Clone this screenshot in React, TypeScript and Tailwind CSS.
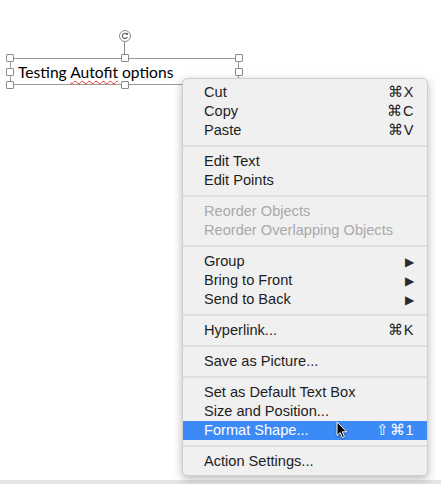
import type { ReactNode } from "react";

type Item =
  | { kind: "item"; label: string; shortcut?: string; submenu?: boolean; disabled?: boolean; active?: boolean }
  | { kind: "sep" };

const MENU: Item[] = [
  { kind: "item", label: "Cut", shortcut: "⌘X" },
  { kind: "item", label: "Copy", shortcut: "⌘C" },
  { kind: "item", label: "Paste", shortcut: "⌘V" },
  { kind: "sep" },
  { kind: "item", label: "Edit Text" },
  { kind: "item", label: "Edit Points" },
  { kind: "sep" },
  { kind: "item", label: "Reorder Objects", disabled: true },
  { kind: "item", label: "Reorder Overlapping Objects", disabled: true },
  { kind: "sep" },
  { kind: "item", label: "Group", submenu: true },
  { kind: "item", label: "Bring to Front", submenu: true },
  { kind: "item", label: "Send to Back", submenu: true },
  { kind: "sep" },
  { kind: "item", label: "Hyperlink...", shortcut: "⌘K" },
  { kind: "sep" },
  { kind: "item", label: "Save as Picture..." },
  { kind: "sep" },
  { kind: "item", label: "Set as Default Text Box" },
  { kind: "item", label: "Size and Position..." },
  { kind: "item", label: "Format Shape...", shortcut: "⇧⌘1", active: true },
  { kind: "sep" },
  { kind: "item", label: "Action Settings..." },
];

function Handle({ hidden }: { hidden?: boolean }) {
  return (
    <div
      className={`h-[8px] w-[8px] rounded-[1px] border border-[#8a8a8a] bg-white ${hidden ? "invisible" : ""}`}
    />
  );
}

function Cursor() {
  return (
    <svg
      width="12"
      height="18"
      viewBox="0 0 12 18"
      className="absolute left-[336px] top-[421px] drop-shadow-[0_1px_1px_rgba(0,0,0,0.4)]"
    >
      <path
        d="M1 1 L1 14.5 L4.2 11.6 L6.4 16.6 L8.4 15.7 L6.3 10.8 L10.6 10.8 Z"
        fill="#000"
        stroke="#fff"
        strokeWidth="1"
        strokeLinejoin="round"
      />
    </svg>
  );
}

function RotateHandle() {
  return (
    <svg width="12" height="12" viewBox="0 0 12 12">
      <circle cx="6" cy="6" r="5.5" fill="#fff" stroke="#8a8a8a" />
      <path d="M8.3 4.6 A2.6 2.6 0 1 0 8.4 7" fill="none" stroke="#555" strokeWidth="1.1" />
      <path d="M8.9 2.6 L8.7 5 L6.4 4.5 Z" fill="#555" />
    </svg>
  );
}

function Row({ item }: { item: Extract<Item, { kind: "item" }> }) {
  let tone = "text-[#1d1d1d]";
  if (item.disabled) tone = "text-[#a9a9a9]";
  if (item.active) tone = "text-white bg-[#3c8af6]";
  let right: ReactNode = null;
  if (item.shortcut) right = <span className="tracking-[0.5px]">{item.shortcut}</span>;
  if (item.submenu) right = <span className="text-[12px] text-[#2a2a2a]">▶</span>;
  return (
    <div className={`flex h-[19px] items-center justify-between pl-[21px] pr-[13px] ${tone}`}>
      <span>{item.label}</span>
      {right}
    </div>
  );
}

export default function App() {
  return (
    <div className="flex h-[484px] w-[441px] flex-col bg-white">
      <div className="relative flex-1">
        {/* selected text box */}
        <div className="absolute left-[6px] top-[30px] flex w-[237px] flex-col items-center">
          <RotateHandle />
          <div className="h-[16px] w-[1px] bg-[#8a8a8a]" />
          <div className="relative h-[27px] w-[229px] border border-[#9a9a9a]">
            <div className="pl-[7px] pt-[2px] font-['Lato',sans-serif] text-[15.6px] leading-[22px] text-black">
              Testing{" "}
              <span className="underline decoration-[#e0362c] decoration-wavy decoration-1 underline-offset-2">
                Autofit
              </span>{" "}
              options
            </div>
            <div className="absolute -inset-[5px] flex flex-col justify-between">
              <div className="flex justify-between">
                <Handle />
                <Handle />
                <Handle />
              </div>
              <div className="flex justify-between">
                <Handle />
                <Handle hidden />
                <Handle />
              </div>
              <div className="flex justify-between">
                <Handle />
                <Handle />
                <Handle />
              </div>
            </div>
          </div>
        </div>

        {/* context menu */}
        <div className="absolute left-[182px] top-[78px] w-[246px] rounded-[5px] border border-[#cfcfcf] bg-[#f0f0f0] pb-[4px] pt-[4px] font-['Liberation_Sans',Arial,sans-serif] text-[14.6px] shadow-[0_3px_10px_rgba(0,0,0,0.28)]">
          {MENU.map((item, i) =>
            item.kind === "sep" ? (
              <div key={i} className="flex h-[12px] items-center">
                <div className="h-[2px] w-full bg-[#dedede]" />
              </div>
            ) : (
              <Row key={i} item={item} />
            ),
          )}
        </div>
        <Cursor />
      </div>
      <div className="h-[4px] bg-[#e4e4e4]" />
    </div>
  );
}
